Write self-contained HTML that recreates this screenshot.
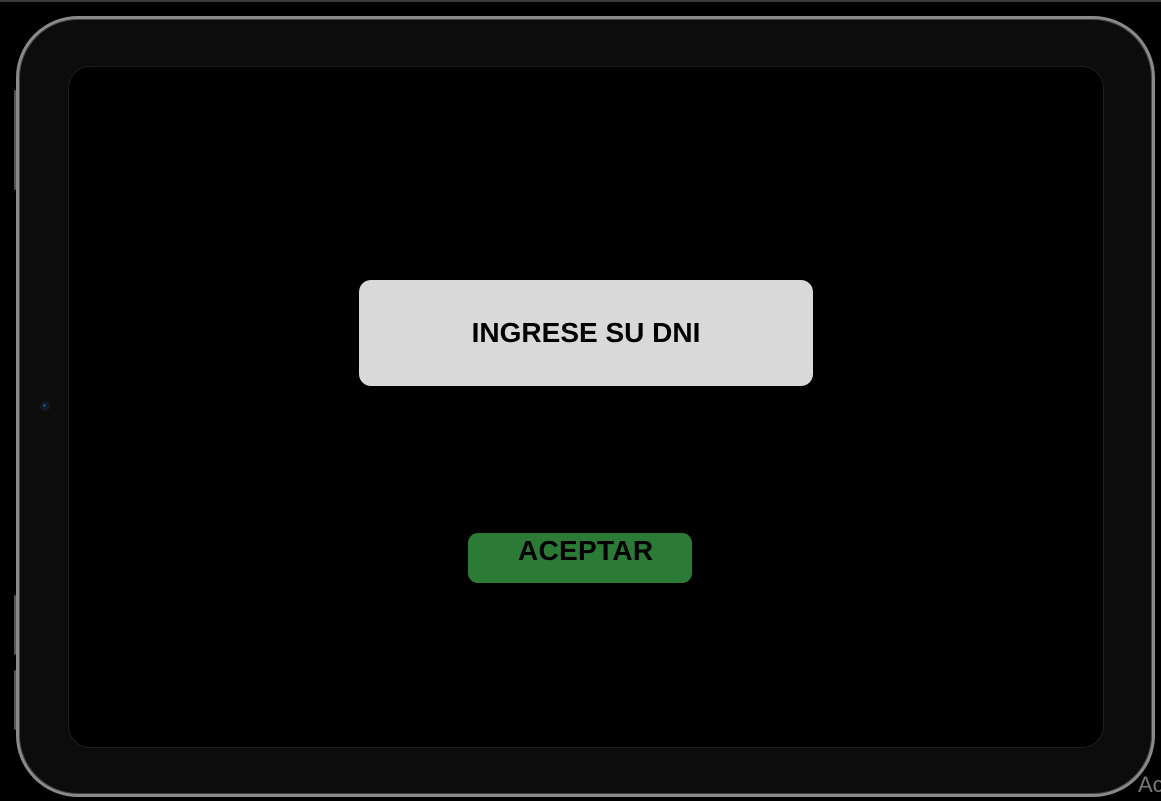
<!DOCTYPE html>
<html><head><meta charset="utf-8"><style>
html,body{margin:0;padding:0;background:#000;width:1161px;height:801px;overflow:hidden;font-family:"Liberation Sans",sans-serif;}
.topline{position:absolute;left:0;top:0;width:1161px;height:2px;background:#3a3a3a;}
.dev{position:absolute;left:16px;top:16px;width:1133px;height:775px;border:3px solid #8a8a8a;border-radius:62px;background:#0c0c0c;box-shadow:inset 0 0 0 1px #444;}
.screen{position:absolute;left:68px;top:66px;width:1034px;height:680px;border:1px solid #1c1f21;border-radius:22px;background:#000;}
.cam{position:absolute;left:41px;top:402px;width:8px;height:8px;border-radius:50%;background:#0c1a2a;box-shadow:0 0 0 1px #1a1a1a;}
.cam:after{content:"";position:absolute;left:2px;top:2px;width:3px;height:3px;border-radius:50%;background:#1e4a7a;}
.btnside{position:absolute;left:14px;width:2px;background:#555;border-radius:1px;}
.box{position:absolute;left:359px;top:280px;width:454px;height:106px;background:#d9d9d9;border-radius:12px;display:flex;align-items:center;justify-content:center;font-weight:bold;font-size:28px;color:#000;}
.ok{position:absolute;left:468px;top:533px;width:224px;height:50px;background:#2b7a35;border-radius:10px;}
.ok span{position:absolute;left:50px;top:2px;font-weight:bold;font-size:28px;color:#000;letter-spacing:0.3px;}
.ac{position:absolute;left:1138px;top:772px;font-size:22px;color:#777;}
</style></head><body>
<div class="topline"></div>
<div class="btnside" style="top:90px;height:100px"></div>
<div class="btnside" style="top:595px;height:60px"></div>
<div class="btnside" style="top:670px;height:60px"></div>
<div class="dev"></div>
<div class="screen"></div>
<div class="cam"></div>
<div class="box">INGRESE SU DNI</div>
<div class="ok"><span>ACEPTAR</span></div>
<div class="ac">Ac</div>
</body></html>
